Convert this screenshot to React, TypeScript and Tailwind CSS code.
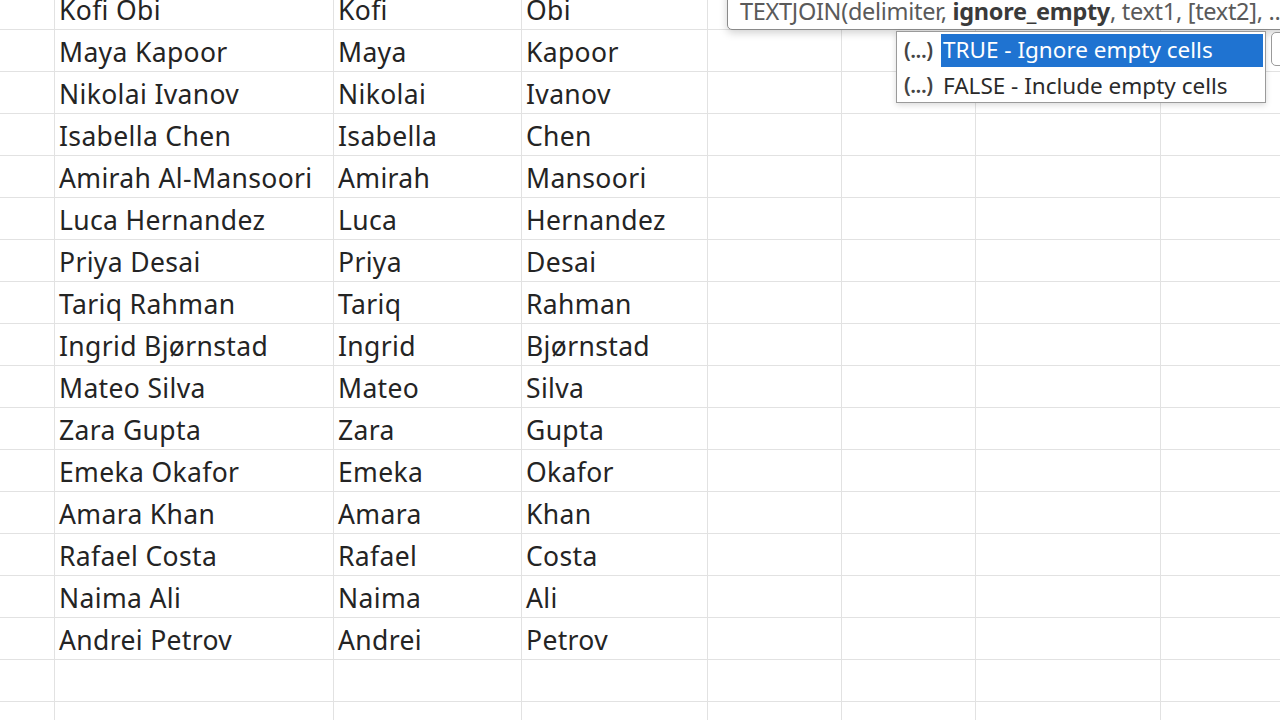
import React from "react";

const rows: [string, string, string][] = [
  ["Kofi Obi", "Kofi", "Obi"],
  ["Maya Kapoor", "Maya", "Kapoor"],
  ["Nikolai Ivanov", "Nikolai", "Ivanov"],
  ["Isabella Chen", "Isabella", "Chen"],
  ["Amirah Al-Mansoori", "Amirah", "Mansoori"],
  ["Luca Hernandez", "Luca", "Hernandez"],
  ["Priya Desai", "Priya", "Desai"],
  ["Tariq Rahman", "Tariq", "Rahman"],
  ["Ingrid Bjørnstad", "Ingrid", "Bjørnstad"],
  ["Mateo Silva", "Mateo", "Silva"],
  ["Zara Gupta", "Zara", "Gupta"],
  ["Emeka Okafor", "Emeka", "Okafor"],
  ["Amara Khan", "Amara", "Khan"],
  ["Rafael Costa", "Rafael", "Costa"],
  ["Naima Ali", "Naima", "Ali"],
  ["Andrei Petrov", "Andrei", "Petrov"],
  ["", "", ""],
  ["", "", ""],
];

const cell = "h-[42px] shrink-0 border-r border-b border-[#e2e2e2] pl-[4px] pt-[3px] flex items-center whitespace-nowrap overflow-visible";

export default function App() {
  return (
    <div className="relative w-[1280px] h-[720px] overflow-hidden bg-white font-['Noto_Sans',sans-serif] text-[#242424]">
      {/* Grid */}
      <div className="-mt-[12px] flex flex-col">
        {rows.map((r, i) => (
          <div key={i} className="flex text-[26.5px] leading-none tracking-[0.35px]">
            <div className={`${cell} w-[55px]`} />
            <div className={`${cell} w-[279px]`}>{r[0]}</div>
            <div className={`${cell} w-[188px]`}>{r[1]}</div>
            <div className={`${cell} w-[186px]`}>{r[2]}</div>
            <div className={`${cell} w-[134px]`} />
            <div className={`${cell} w-[134px]`} />
            <div className={`${cell} w-[185px]`} />
            <div className={`${cell} w-[200px]`} />
          </div>
        ))}
      </div>

      {/* Function signature tooltip */}
      <div className="absolute left-[727px] top-[-12px] w-[640px] h-[42px] rounded-[5px] border border-[#8a8a8a] bg-white shadow-[0_3px_8px_rgba(0,0,0,0.18)] pl-[12px] flex items-end pb-[6px]">
        <span className="text-[23.5px] leading-none text-[#5a5a5a] whitespace-nowrap tracking-[-0.3px]">
          TEXTJOIN(delimiter, <b className="font-bold text-[#3a3a3a]">ignore_empty</b>, text1, [text2], ...)
        </span>
      </div>

      {/* Autocomplete list */}
      <div className="absolute left-[896px] top-[31px] w-[370px] h-[72px] border border-[#9a9a9a] bg-white shadow-[0_2px_6px_rgba(0,0,0,0.15)] p-[2px] flex flex-col">
        <div className="flex h-[34px] items-center">
          <span className="w-[42px] shrink-0 pl-[5px] text-[21px] font-semibold text-[#444] leading-none tracking-[-0.5px]">(...)</span>
          <span className="flex-1 h-full bg-[#1f73d1] text-white text-[22.5px] leading-none flex items-center pl-[2px] whitespace-nowrap">
            TRUE - Ignore empty cells
          </span>
        </div>
        <div className="flex h-[34px] items-center pt-[5px]">
          <span className="w-[42px] shrink-0 pl-[5px] text-[21px] font-semibold text-[#444] leading-none tracking-[-0.5px]">(...)</span>
          <span className="flex-1 text-[#2a2a2a] text-[22.5px] leading-none pl-[2px] whitespace-nowrap">
            FALSE - Include empty cells
          </span>
        </div>
      </div>

      {/* Description tip, mostly off screen */}
      <div className="absolute left-[1271px] top-[32px] w-[60px] h-[34px] rounded-[5px] border border-[#9a9a9a] bg-white" />
    </div>
  );
}
